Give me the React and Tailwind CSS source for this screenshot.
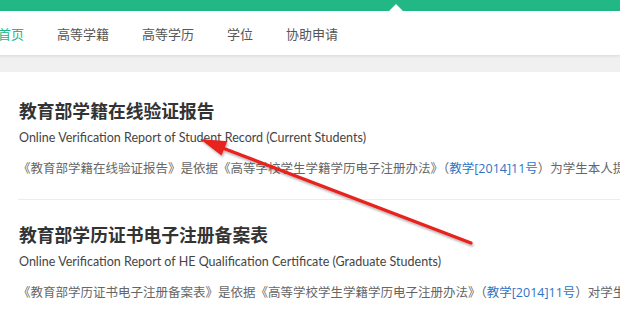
import React from 'react';

const navItems = ['首页', '高等学籍', '高等学历', '学位', '协助申请'];

const reports = [
  {
    title: '教育部学籍在线验证报告',
    en: 'Online Verification Report of Student Record (Current Students)',
    before: '《教育部学籍在线验证报告》是依据《高等学校学生学籍学历电子注册办法》（',
    after: '）为学生本人提供的学籍在线验证服务'
  },
  {
    title: '教育部学历证书电子注册备案表',
    en: 'Online Verification Report of HE Qualification Certificate (Graduate Students)',
    before: '《教育部学历证书电子注册备案表》是依据《高等学校学生学籍学历电子注册办法》（',
    after: '）对学生学历证书的电子注册备案'
  }
];

const cjk = '"Microsoft YaHei", "Noto Sans CJK SC", "Noto Sans", sans-serif';
const latin = '"Segoe UI", Lato, "Noto Sans CJK SC", sans-serif';

const Arrow = () => (
  <svg className="absolute left-0 top-0 pointer-events-none" width="620" height="309" viewBox="0 0 620 309">
    <defs>
      <filter id="sh" x="-10%" y="-10%" width="120%" height="120%">
        <feDropShadow dx="1" dy="2" stdDeviation="1.2" floodColor="#000" floodOpacity="0.3" />
      </filter>
    </defs>
    <g filter="url(#sh)">
      <line x1="471" y1="243" x2="220" y2="147" stroke="#e8201c" strokeWidth="3.2" strokeLinecap="round" />
      <polygon points="200,139 221.5,155.5 227.3,141.3" fill="#e8201c" />
    </g>
  </svg>
);

export default function App() {
  return (
    <div className="relative w-[620px] h-[309px] overflow-hidden bg-white" style={{ fontFamily: cjk }}>
      <div className="relative h-[11px] bg-[#22b886]">
        <div className="absolute left-[389px] top-[4px] w-0 h-0 border-l-[7px] border-r-[7px] border-b-[7px] border-l-transparent border-r-transparent border-b-white" />
      </div>
      <nav className="relative z-10 h-[44px] pt-[2px] bg-white flex items-center gap-[33px] -ml-[2px] shadow-[0_1px_3px_rgba(0,0,0,0.10)] text-[13px] text-[#555] whitespace-nowrap">
        {navItems.map((item, i) => (
          <span key={item} className={i === 0 ? 'text-[#22b886]' : ''}>{item}</span>
        ))}
      </nav>
      <div className="h-[17px] bg-[#f0f0f0]" />
      <div className="bg-white pt-[4px] whitespace-nowrap">
        {reports.map((r, i) => (
          <section key={r.title} className={`ml-[18px] pt-[21px] pb-[20px] ${i === 0 ? 'border-b border-[#ececec]' : ''}`}>
            <h2 className="text-[17.8px] leading-[26px] font-bold text-[#333] pl-[1px]">{r.title}</h2>
            <p className="mt-[5px] text-[12.5px] leading-[20px] text-[#444] pl-[1px]" style={{ fontFamily: latin }}>{r.en}</p>
            <p className="mt-[10px] text-[12.5px] leading-[20px] text-[#666]">
              {r.before}
              <span className="text-[#2f73c4]" style={{ fontFamily: '"Open Sans", "Noto Sans CJK SC", sans-serif' }}>教学[2014]11号</span>
              {r.after}
            </p>
          </section>
        ))}
      </div>
      <Arrow />
    </div>
  );
}
